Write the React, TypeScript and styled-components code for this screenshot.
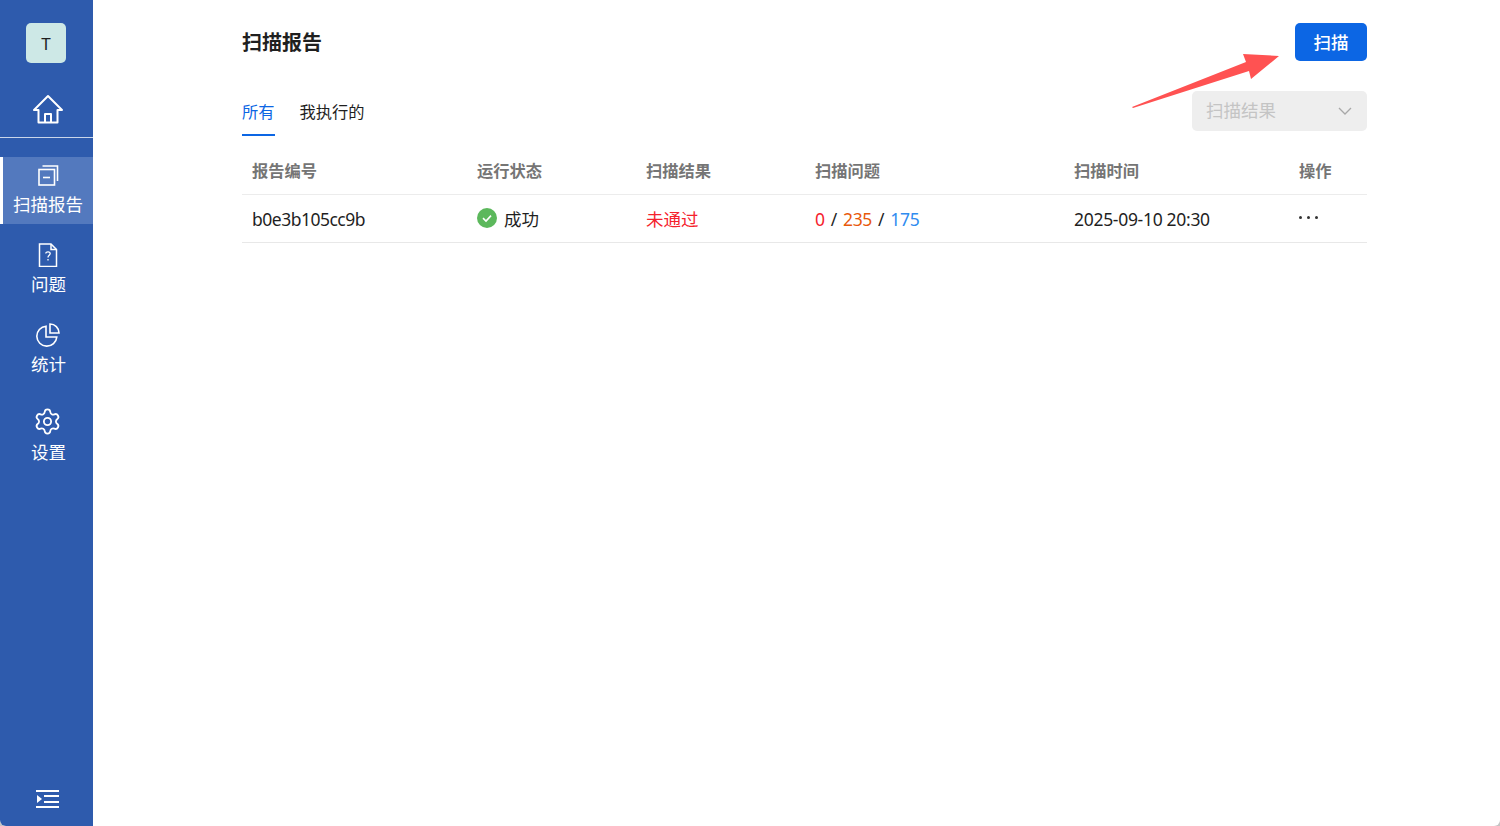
import { createGlobalStyle, styled } from 'styled-components';
import { Settings } from 'lucide-react';

const GlobalStyle = createGlobalStyle`
  html, body, #root {
    height: 100%;
    margin: 0;
  }

  body {
    background: #c4c4c4;
    color: #1f1f1f;
    font-family: "Noto Sans", "Noto Sans CJK SC", sans-serif;
    overflow: hidden;
  }
`;

const columns = [
  { key: 'id', label: '报告编号', width: 225 },
  { key: 'status', label: '运行状态', width: 169 },
  { key: 'result', label: '扫描结果', width: 169 },
  { key: 'issues', label: '扫描问题', width: 259 },
  { key: 'time', label: '扫描时间', width: 225 },
  { key: 'action', label: '操作', width: 78 },
];

export default function App() {
  return (
    <>
      <GlobalStyle />
      <Page>
        <Sidebar>
          <AvatarWrap>
            <Avatar>T</Avatar>
          </AvatarWrap>
          <HomeLink>
            <svg width="32" height="30" viewBox="0 0 32 30" fill="none" stroke="#fff" strokeWidth="2" strokeLinejoin="round">
              <path d="M16 2 L2 16 H6.5 V28.5 H25.5 V16 H30 Z" />
              <path d="M13 28.5 V20 H19 V28.5" />
            </svg>
          </HomeLink>
          <Nav>
            <NavItem $active>
              <svg width="24" height="24" viewBox="0 0 24 24" fill="none" stroke="#fff" strokeWidth="1.6">
                <rect x="3" y="6.5" width="15.5" height="15.5" />
                <path d="M6.5 3 H21.5 V18" />
                <path d="M7 14.5 H14" />
              </svg>
              <NavLabel>扫描报告</NavLabel>
            </NavItem>
            <NavItem>
              <svg width="24" height="24" viewBox="0 0 24 24" fill="none" stroke="#fff" strokeWidth="1.5">
                <path d="M3.5 1 H15 L20.5 6.5 V23.5 H3.5 Z" />
                <path d="M15 1 V6.5 H20.5" />
                <path d="M9.8 10.5 C9.8 8.2 14.2 8.2 14.2 10.6 C14.2 12.2 12 12.3 12 14.4" strokeWidth="1.3" />
                <path d="M12 16 V17.5" strokeWidth="1.3" />
              </svg>
              <NavLabel>问题</NavLabel>
            </NavItem>
            <NavItem>
              <svg width="24" height="24" viewBox="0 0 24 24" fill="none" stroke="#fff" strokeWidth="1.6">
                <path d="M10 3.2 A10 10 0 1 0 20.8 14 H10 Z" />
                <path d="M14 1 A9 9 0 0 1 23 10 H14 Z" />
              </svg>
              <NavLabel>统计</NavLabel>
            </NavItem>
            <NavItem $tall>
              <Settings size={29} color="#fff" strokeWidth={1.5} />
              <NavLabel $tight>设置</NavLabel>
            </NavItem>
          </Nav>
          <CollapseButton>
            <svg width="24" height="20" viewBox="0 0 24 20" fill="#fff">
              <rect x="0" y="1" width="23" height="2" />
              <rect x="8" y="6" width="15" height="2" />
              <rect x="8" y="12" width="15" height="2" />
              <rect x="0" y="17" width="23" height="2" />
              <path d="M1 6 L6 10 L1 14 Z" />
            </svg>
          </CollapseButton>
        </Sidebar>

        <Main>
          <Header>
            <Title>扫描报告</Title>
            <PrimaryButton>扫描</PrimaryButton>
          </Header>

          <Toolbar>
            <Tabs>
              <Tab $active>所有</Tab>
              <Tab>我执行的</Tab>
            </Tabs>
            <SelectBox>
              <SelectText>扫描结果</SelectText>
              <svg width="14" height="8" viewBox="0 0 14 8" fill="none" stroke="#a8a8a8" strokeWidth="1.3">
                <path d="M1 1 L7 7 L13 1" />
              </svg>
            </SelectBox>
          </Toolbar>

          <Table>
            <thead>
              <tr>
                {columns.map((col) => (
                  <HeadCell key={col.key} style={{ width: col.width }}>
                    {col.label}
                  </HeadCell>
                ))}
              </tr>
            </thead>
            <tbody>
              <tr>
                <LatinCell $spacing={-0.5}>b0e3b105cc9b</LatinCell>
                <Cell>
                  <Status>
                    <svg width="20" height="20" viewBox="0 0 20 20">
                      <circle cx="10" cy="10" r="10" fill="#5cb85c" />
                      <path d="M6 10.2 L9 13 L14 7.6" fill="none" stroke="#fff" strokeWidth="1.6" />
                    </svg>
                    成功
                  </Status>
                </Cell>
                <Cell>
                  <Failed>未通过</Failed>
                </Cell>
                <LatinCell $spacing={-0.3}>
                  <Count $color="#f5222d">0</Count>
                  <Slash>/</Slash>
                  <Count $color="#e8590c">235</Count>
                  <Slash>/</Slash>
                  <Count $color="#2f8cf0">175</Count>
                </LatinCell>
                <LatinCell $spacing={-0.3}>2025-09-10 20:30</LatinCell>
                <Cell>
                  <MoreDots>
                    <i />
                    <i />
                    <i />
                  </MoreDots>
                </Cell>
              </tr>
            </tbody>
          </Table>

          <Arrow width="150" height="56" viewBox="0 0 150 56">
            <path d="M0 54 L114 9 L111 1 L147 3 L119 26 L117 18 L1 55 Z" fill="#ff5252" />
          </Arrow>
        </Main>
      </Page>
    </>
  );
}

const Page = styled.div`
  display: flex;
  height: 826px;
  width: 1500px;
  background-color: #fff;
  border-radius: 0 0 6px 6px;
  overflow: hidden;
`;

const Sidebar = styled.aside`
  display: flex;
  flex-direction: column;
  flex: 0 0 93px;
  background-color: #2e5bad;
`;

const AvatarWrap = styled.div`
  display: flex;
  justify-content: center;
  padding: 23px 1px 0 0;
`;

const Avatar = styled.div`
  display: flex;
  align-items: center;
  justify-content: center;
  width: 40px;
  height: 40px;
  border-radius: 5px;
  background-color: #cde8e6;
  color: #1f1f1f;
  font-size: 17px;
`;

const HomeLink = styled.div`
  display: flex;
  justify-content: center;
  align-items: flex-start;
  height: 75px;
  box-sizing: border-box;
  padding: 31px 0 0 3px;
  border-bottom: 1px solid rgba(255, 255, 255, 0.75);
`;

const Nav = styled.nav`
  display: flex;
  flex-direction: column;
  flex: 1;
  margin-top: 19px;
`;

const NavItem = styled.div<{ $active?: boolean; $tall?: boolean }>`
  display: flex;
  flex-direction: column;
  align-items: center;
  height: ${({ $tall }) => ($tall ? '86px' : '80px')};
  padding: ${({ $tall }) => ($tall ? '10px' : '6px')} 0 0 4px;
  box-sizing: border-box;
  color: #fff;

  svg {
    margin-right: 2px;
  }

  ${({ $active }) =>
    $active &&
    `
    height: 67px;
    margin-bottom: 13px;
    padding-left: 0;
    background-color: #5379be;
    border-left: 3px solid #fff;

    svg {
      margin-right: 0;
    }
  `}
`;

const NavLabel = styled.span<{ $tight?: boolean }>`
  font-size: 17.5px;
  line-height: 26px;
  margin-top: ${({ $tight }) => ($tight ? '3px' : '4px')};
  white-space: nowrap;
`;

const CollapseButton = styled.div`
  display: flex;
  justify-content: center;
  padding: 0 0 17px 2px;
`;

const Main = styled.main`
  position: relative;
  flex: 1;
  box-sizing: border-box;
  padding: 23px 133px 0 149px;
`;

const Header = styled.div`
  display: flex;
  align-items: center;
  justify-content: space-between;
`;

const Title = styled.h1`
  margin: -1px 0 0;
  font-size: 20px;
  font-weight: 600;
  color: #1f1f1f;
`;

const PrimaryButton = styled.button`
  width: 72px;
  height: 38px;
  padding: 0 0 2px;
  border: none;
  border-radius: 5px;
  background-color: #0c66e4;
  color: #fff;
  font-family: inherit;
  font-size: 17.5px;
  font-weight: 500;
`;

const Toolbar = styled.div`
  display: flex;
  align-items: flex-start;
  justify-content: space-between;
  margin-top: 30px;
  height: 57px;
`;

const Tabs = styled.div`
  display: flex;
  gap: 25px;
`;

const Tab = styled.div<{ $active?: boolean }>`
  height: 45px;
  box-sizing: border-box;
  padding-top: 9px;
  font-size: 16.25px;
  line-height: 24px;
  color: ${({ $active }) => ($active ? '#0c66e4' : '#1f1f1f')};
  border-bottom: 2px solid ${({ $active }) => ($active ? '#0c66e4' : 'transparent')};
`;

const SelectBox = styled.div`
  display: flex;
  align-items: center;
  justify-content: space-between;
  width: 175px;
  height: 40px;
  box-sizing: border-box;
  padding: 0 15px 0 14px;
  border-radius: 5px;
  background-color: #eeeeee;
  color: #c4c4c4;
  font-size: 17.5px;
`;

const SelectText = styled.span`
  margin-top: -3px;
`;

const Table = styled.table`
  width: 1125px;
  table-layout: fixed;
  border-collapse: collapse;
`;

const HeadCell = styled.th`
  box-sizing: border-box;
  height: 46px;
  padding: 0 10px 2px;
  text-align: left;
  font-size: 16.25px;
  font-weight: 600;
  color: #757575;
  border-bottom: 1px solid #ececec;
`;

const Cell = styled.td`
  box-sizing: border-box;
  height: 48px;
  padding: 0 10px;
  font-size: 17.5px;
  color: #1f1f1f;
  border-bottom: 1px solid #e8e8e8;
`;

const LatinCell = styled(Cell)<{ $spacing: number }>`
  padding-top: 2px;
  letter-spacing: ${({ $spacing }) => $spacing}px;
`;

const Status = styled.span`
  display: flex;
  align-items: center;
  gap: 7px;
`;

const Failed = styled.span`
  color: #f5222d;
`;

const Count = styled.span<{ $color: string }>`
  color: ${({ $color }) => $color};
`;

const Slash = styled.span`
  margin: 0 6px;
`;

const MoreDots = styled.span`
  display: flex;
  gap: 5px;
  margin-top: -1px;

  i {
    width: 3px;
    height: 3px;
    border-radius: 50%;
    background-color: #333;
  }
`;

const Arrow = styled.svg`
  position: absolute;
  left: 1039px;
  top: 53px;
`;
